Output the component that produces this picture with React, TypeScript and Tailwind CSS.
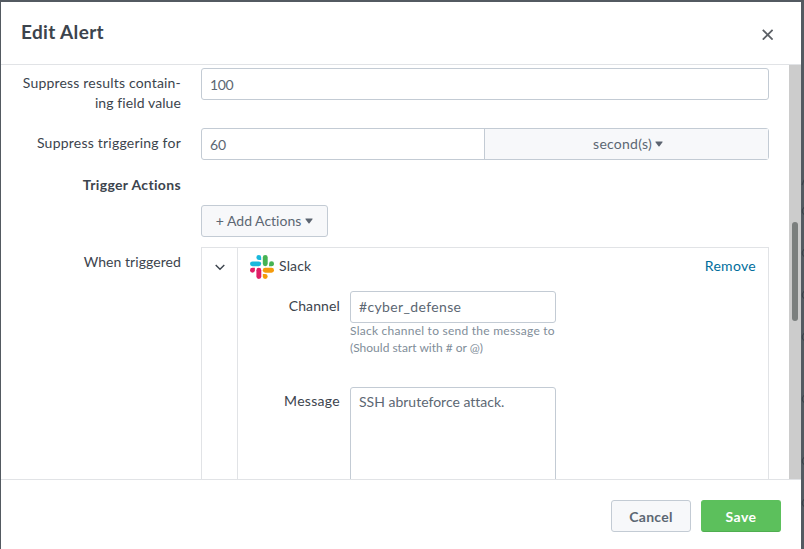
import type { ReactNode } from 'react';

function Caret() {
  return (
    <svg width="8" height="6" viewBox="0 0 8 6" className="shrink-0">
      <path d="M0.8 0.6h6.4q0.8 0 0.3 0.7L4.5 5.2q-0.5 0.5-1 0L0.5 1.3q-0.5-0.7 0.3-0.7z" fill="#5c6470" />
    </svg>
  );
}

function SlackLogo() {
  return (
    <svg width="24" height="24" viewBox="0 0 24 24" className="shrink-0">
      <g fill="#19b8dc">
        <path d="M8.8 0a2.4 2.4 0 0 0 0 4.9h2.4V2.4A2.4 2.4 0 0 0 8.8 0z" />
        <rect x="0" y="6.4" width="11.2" height="4.9" rx="2.45" />
      </g>
      <g fill="#46b353">
        <rect x="12.8" y="0" width="4.9" height="11.3" rx="2.45" />
        <path d="M24 8.8a2.4 2.4 0 0 0-4.9 0v2.5h2.5A2.4 2.4 0 0 0 24 8.8z" />
      </g>
      <g fill="#f59b0b">
        <rect x="12.8" y="12.8" width="11.2" height="4.9" rx="2.45" />
        <path d="M15.2 24a2.4 2.4 0 0 0 0-4.9h-2.4v2.5a2.4 2.4 0 0 0 2.4 2.4z" />
      </g>
      <g fill="#e01e66">
        <rect x="6.4" y="12.8" width="4.9" height="11.2" rx="2.45" />
        <path d="M0 15.2a2.4 2.4 0 0 0 4.9 0v-2.4H2.4A2.4 2.4 0 0 0 0 15.2z" />
      </g>
    </svg>
  );
}

// Sliver of the dimmed page that shows beside the dialog.
function DimmedPage() {
  return (
    <svg width="3" height="547" viewBox="0 0 3 547" className="shrink-0" fill="none" stroke="#3a4149" strokeWidth="1.1">
      <path d="M1 183l2-5" />
      {[209, 251, 293, 335, 397, 459, 501].map((y) => (
        <circle key={y} cx="5" cy={y} r="3.8" />
      ))}
    </svg>
  );
}

function Label({ children, className = '' }: { children: ReactNode; className?: string }) {
  return (
    <div className={`flex w-[180px] shrink-0 flex-col items-end whitespace-nowrap leading-5 ${className}`}>
      {children}
    </div>
  );
}

export default function App() {
  return (
    <div className="flex h-[549px] w-[804px] overflow-hidden bg-[#535a61] pl-px pt-[2px] font-['Lato',sans-serif] text-[14px] text-[#3c444d] [font-variant-ligatures:none]">
      <div className="flex w-[800px] shrink-0 flex-col bg-white">
        <header className="flex h-[63px] shrink-0 items-center justify-between border-b border-[#e1e3e6] pl-5 pr-7">
          <h1 className="pb-[2px] text-[19px] font-bold leading-6 tracking-[0.36px]">Edit Alert</h1>
          <svg width="11" height="11" viewBox="0 0 11 11" stroke="#5c6066" strokeWidth="1.8" className="mt-[2px]">
            <path d="M0.8 0.8l9.8 9.8M10.6 0.8l-9.8 9.8" />
          </svg>
        </header>

        <main className="flex h-[414px] shrink-0 overflow-hidden">
          <div className="w-[788px] pt-[3px]">
            <div className="flex h-[60px] gap-5">
              <Label className="pt-[5px]">
                <span className="tracking-[0.19px]">Suppress results contain-</span>
                <span className="tracking-[0.1px]">ing field value</span>
              </Label>
              <div className="flex h-8 w-[568px] items-center rounded-[3px] border border-[#c3cbd4] px-2 text-[#5c6773]">
                <span className="tracking-[-0.4px]">100</span>
              </div>
            </div>

            <div className="flex h-[47px] gap-5">
              <Label className="pt-[5px]">
                <span className="tracking-[0.22px]">Suppress triggering for</span>
              </Label>
              <div className="flex h-8 w-[568px] rounded-[3px] border border-[#c3cbd4] text-[#5c6773]">
                <div className="flex w-[283px] items-center border-r border-[#c3cbd4] pl-2">
                  <span>60</span>
                </div>
                <div className="flex flex-1 items-center justify-center gap-[3px] bg-[#f7f8fa] pl-[3px]">
                  <span className="pb-[2px] tracking-[0.25px]">second(s)</span>
                  <Caret />
                </div>
              </div>
            </div>

            <Label className="h-[30px] font-bold">
              <span className="tracking-[0.35px]">Trigger Actions</span>
            </Label>

            <div className="ml-[200px] flex h-8 w-[127px] items-center justify-center gap-1 rounded-[3px] border border-[#c3cbd4] bg-[#f7f8fa] text-[#5c6773]">
              <span className="pb-[2px]">+ Add Actions</span>
              <Caret />
            </div>

            <div className="mt-[10px] flex gap-5">
              <Label className="pt-[5px]">
                <span className="tracking-[0.07px]">When triggered</span>
              </Label>
              <section className="flex h-[300px] w-[568px] border border-[#e1e3e6]">
                <div className="flex w-9 shrink-0 justify-center border-r border-[#e1e3e6] pt-[16px]">
                  <svg width="10" height="7" viewBox="0 0 10 7" fill="none" stroke="#3c444d" strokeWidth="1.4">
                    <path d="M0.7 1l4.3 4.3L9.3 1" />
                  </svg>
                </div>
                <div className="flex-1 pl-3 pr-3 pt-[7px]">
                  <div className="flex h-6 items-center gap-[5px]">
                    <SlackLogo />
                    <span className="pb-[3px] tracking-[0.15px]">Slack</span>
                    <a className="ml-auto pb-[3px] tracking-[0.3px] text-[#006d9c]">Remove</a>
                  </div>
                  <div className="mt-3 flex h-24 gap-[10px]">
                    <div className="flex w-[90px] justify-end pt-[5px] leading-5 tracking-[0.12px]">Channel</div>
                    <div className="w-[206px]">
                      <div className="flex h-8 items-center rounded-[3px] border border-[#c3cbd4] px-2 text-[#5c6773]">
                        <span className="pb-px tracking-[0.36px]">#cyber_defense</span>
                      </div>
                      <p className="-mt-px whitespace-nowrap text-[12px] leading-[17px] text-[#818d99]">
                        <span className="tracking-[0.25px]">Slack channel to send the message to</span>
                        <br />
                        <span>(Should start with # or @)</span>
                      </p>
                    </div>
                  </div>
                  <div className="mt-px flex gap-[10px]">
                    <div className="flex w-[90px] justify-end pt-[3px] leading-5 tracking-[0.3px]">Message</div>
                    <div className="-mt-px h-[140px] w-[206px] rounded-[3px] border border-[#c3cbd4] px-2 pt-1 leading-5 text-[#5c6773]">
                      <span>SSH abruteforce attack.</span>
                    </div>
                  </div>
                </div>
              </section>
            </div>
          </div>
          <div className="flex w-3 justify-center bg-[#cccccc] pt-[157px]">
            <div className="h-[99px] w-[6px] rounded-full bg-[#7b7f7e]" />
          </div>
        </main>

        <footer className="flex flex-1 items-start justify-end gap-[10px] border-t border-[#e1e3e6] pr-5 pt-5 font-bold">
          <div className="flex h-8 w-20 items-center justify-center rounded-[3px] border border-[#c3cbd4] bg-[#f7f8fa] text-[#5c6773]">
            <span className="tracking-[0.3px]">Cancel</span>
          </div>
          <div className="flex h-8 w-20 items-center justify-center rounded-[3px] border border-[#5cc05c] border-b-[#4fae50] bg-[#5cc05c] text-white">
            <span className="tracking-[0.4px]">Save</span>
          </div>
        </footer>
      </div>
      <DimmedPage />
    </div>
  );
}
